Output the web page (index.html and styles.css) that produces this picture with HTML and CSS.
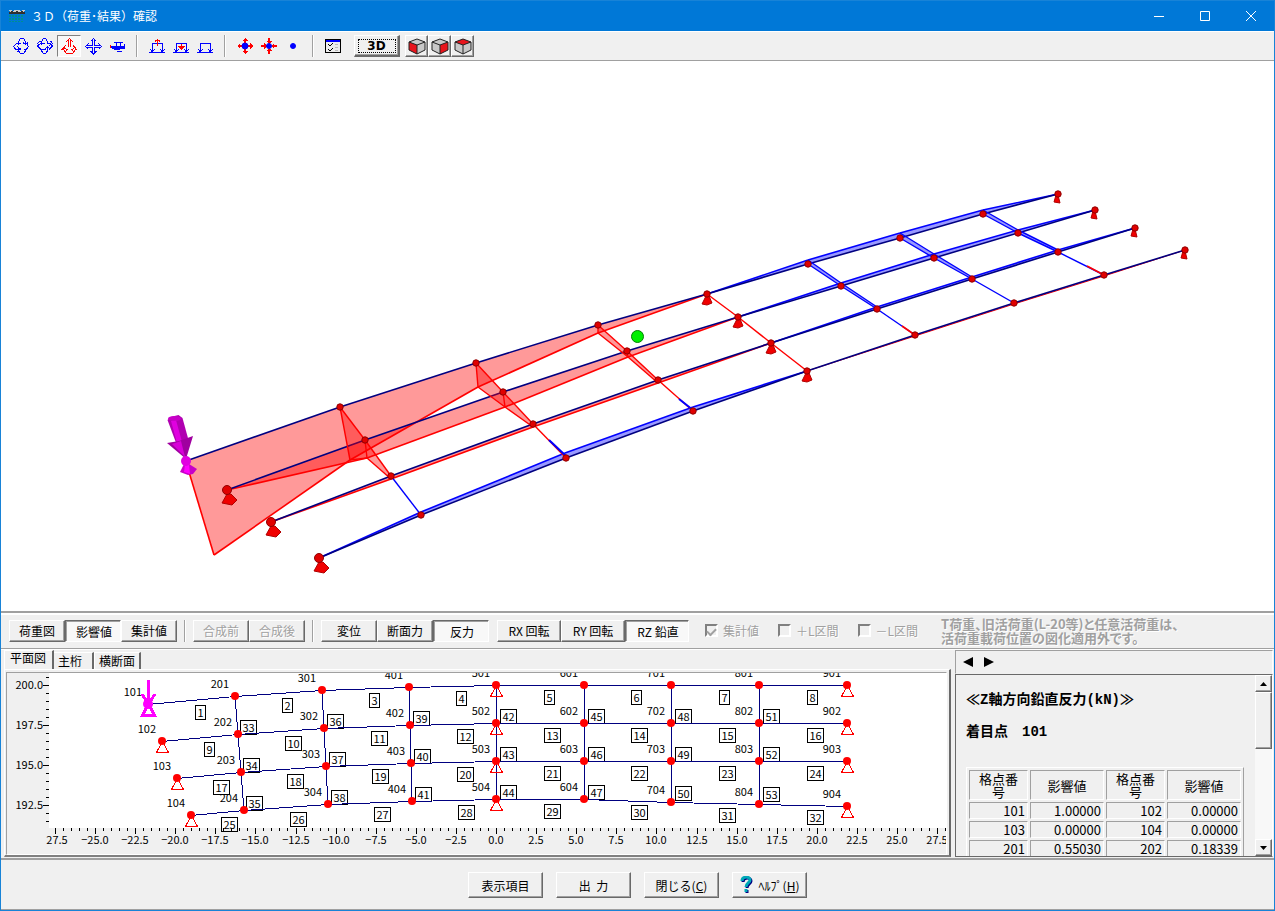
FILE: index.html
```html
<!DOCTYPE html>
<html lang="ja">

<head>
    <meta charset="utf-8">
    <meta name="viewport" content="width=device-width, initial-scale=1">
    <title>３Ｄ（荷重･結果）確認</title>
    <link rel="stylesheet" href="styles.css">
</head>

<body>
    <div class="window">
        <header class="titlebar">
            <svg class="app-icon" width="16" height="14" viewBox="0 0 16 14" shape-rendering="crispEdges">
                <path d="M0 1h3M5 1h6M13 1h3M1 2h14" stroke="#ccc" />
                <path d="M0 4h16M2 3h2M7 3h2M12 3h2" stroke="#303030" stroke-width="2" />
                <path d="M1 6v7M4 6v7M7 6v7M10 6v7M13 6v7" stroke="#008f8f" stroke-width="2" stroke-dasharray="2 1" />
            </svg>
            <h1>３Ｄ（荷重･結果）確認</h1>
            <div class="caption">
                <button aria-label="最小化"><svg width="12" height="12"><path d="M1 6.5h10" /></svg></button>
                <button aria-label="最大化"><svg width="12" height="12"><path d="M1.5 1.5h9v9h-9z" /></svg></button>
                <button aria-label="閉じる"><svg width="12" height="12"><path d="M1 1l10 10M11 1L1 11" /></svg></button>
            </div>
        </header>

        <div class="toolbar">
            <button class="tool" aria-label="X回転"><svg viewBox="0 0 16 16"><path d="M5.500 7V3.500l2-3h3l2 3V6M10 4.500l2.500 2 2.500-2M5.500 10v3l2 2.500h3l2-2.500v-2M10.500 5.500h3l2 3-2 2.500h-3M8 5.500H3.500L.5 8.500l2 2.500H8M4.500 8.500l3 2.500-3 2.500" /></svg></button>
            <button class="tool" aria-label="Y回転"><svg viewBox="0 0 16 16"><path d="M10.500 6V3.500l-2-3h-2l-2 3V7M4.500 10.500v2.500l2 2.500h2l2-2.500v-4M8 11.500l2.500-3 2.500 3M7.500 5.500H3.500L.5 8l3 3h4M12.500 11l3-3-2-2.500h-3M3.500 3l-3 2.500M13.500 3l2 2.500-3 2" /></svg></button>
            <button class="tool red on" aria-label="Z回転"><svg viewBox="0 0 16 16"><path d="M4.500 4.500l4-4 4 4M7.500 2v7M9.500 2v7M4.500 7.500L2.500 11l2.500 4h7l2.500-4-2-3.500M.5 12l2-2.500 3 2M16 12l-2-2.500-3 2M6.500 11l-2 2.500M10.500 11l2 2.500" /></svg></button>
            <button class="tool" aria-label="移動"><svg viewBox="0 0 16 16"><path d="M7.500 1v6.500H1M9.500 1v6.500H16M7.500 16V9.500H1M9.500 16V9.500H16M5.500 3.500l3-3 3 3M5.500 13l3 3 3-3M3.500 5.500l-3 3 3 3M13.500 5.500l3 3-3 3" /></svg></button>
            <button class="tool" aria-label="視点移動"><svg viewBox="0 0 16 16"><path d="M4.500 4.500h9M7.500 5v3M11.500 5v3M8 13.500h5M15.500 6v5" /><path class="solid" d="M2.500 8.500h12v2h-3l-2 1h-3l-4-2z" /><path class="red-line" d="M1.500 7v3" /></svg></button>
            <span class="sep"></span>
            <button class="tool" aria-label="全体"><svg viewBox="0 0 16 16"><path d="M3.500 13V5.500h10V13M0 14.500h16M1 11l2.500 3 2-3M11 11l2.500 3 2-3" /><path class="red-line" d="M8.500 8V1M6 3.500l2.500-2 2.500 2" /></svg></button>
            <button class="tool" aria-label="拡大"><svg viewBox="0 0 16 16"><path d="M3.500 13V5.500h10V13M0 14.500h16M1 11l2.500 3 2-3M11 11l2.500 3 2-3" /><path class="red-fill" d="M5 8h3V6h1v2h3l-3.500 4z" /></svg></button>
            <button class="tool" aria-label="縮小"><svg viewBox="0 0 16 16"><path d="M3.500 13V5.500h10V13M0 14.500h16M1 11l2.500 3 2-3M11 11l2.500 3 2-3" /></svg></button>
            <span class="sep"></span>
            <button class="tool" aria-label="節点拡大"><svg viewBox="0 0 16 16"><path class="red-fill" d="M8 0l3 3H9v10h2l-3 3-3-3h2V3H5zM0 8l3-3v2h10V5l3 3-3 3V9H3v2z" /><circle class="solid" cx="8" cy="8" r="3" /></svg></button>
            <button class="tool" aria-label="節点縮小"><svg viewBox="0 0 16 16"><path class="red-fill" d="M8 6L5 3h2V0h2v3h2zM8 10l3 3H9v3H7v-3H5zM6 8l-3 3V9H0V7h3V5zM10 8l3-3v2h3v2h-3v2z" /><circle class="solid" cx="8" cy="8" r="2.500" /></svg></button>
            <button class="tool" aria-label="節点標準"><svg viewBox="0 0 16 16"><circle class="solid" cx="8" cy="8" r="2.500" /></svg></button>
            <span class="sep"></span>
            <button class="tool" aria-label="表示設定"><svg viewBox="0 0 16 16"><path d="M.5 1.500h15v13H.5z" fill="#eee" stroke="#000" /><path d="M1 2.500h14" stroke-width="2" /><path d="M3 6l2 2 3-3M3 11l2 2 3-3" stroke="#000" /><path d="M10 6.500h3M10 9.500h3M10 12.500h3" stroke="#bbb" /></svg></button>
            <button class="btn view-3d"><span>3D</span></button>
            <div class="cubes">
                <button class="btn" aria-label="正面"><svg viewBox="0 0 18 18"><path d="M1 5l8-3 8 3v8l-8 4-8-4z" fill="#c8c8c8" /><path d="M1 5l8 3v9l-8-4z" fill="#e8141c" /><path d="M1 5l8-3 8 3v8l-8 4-8-4zM1 5l8 3 8-3M9 8v9" /></svg></button>
                <button class="btn" aria-label="側面"><svg viewBox="0 0 18 18"><path d="M1 5l8-3 8 3v8l-8 4-8-4z" fill="#c8c8c8" /><path d="M17 5L9 8v9l8-4z" fill="#e8141c" /><path d="M1 5l8-3 8 3v8l-8 4-8-4zM1 5l8 3 8-3M9 8v9" /></svg></button>
                <button class="btn" aria-label="平面"><svg viewBox="0 0 18 18"><path d="M1 5l8-3 8 3v8l-8 4-8-4z" fill="#c8c8c8" /><path d="M1 5l8-3 8 3-8 3z" fill="#e8141c" /><path d="M1 5l8-3 8 3v8l-8 4-8-4zM1 5l8 3 8-3M9 8v9" /></svg></button>
            </div>
        </div>

        <main class="view">
            <svg id="scene" viewBox="1 61 1273 550" role="img" aria-label="影響線図"></svg>
        </main>

        <div class="controls">
            <div class="group">
                <button class="btn">荷重図</button>
                <button class="btn on">影響値</button>
                <button class="btn">集計値</button>
            </div>
            <span class="sep"></span>
            <div class="group">
                <button class="btn" disabled>合成前</button>
                <button class="btn" disabled>合成後</button>
            </div>
            <span class="sep"></span>
            <div class="group">
                <button class="btn">変位</button>
                <button class="btn">断面力</button>
                <button class="btn on">反力</button>
            </div>
            <div class="group wide">
                <button class="btn">RX 回転</button>
                <button class="btn">RY 回転</button>
                <button class="btn on">RZ 鉛直</button>
            </div>
            <div class="checks">
                <label><input type="checkbox" checked disabled>集計値</label>
                <label><input type="checkbox" disabled>＋L区間</label>
                <label><input type="checkbox" disabled>－L区間</label>
            </div>
            <p class="note">T荷重、旧活荷重(L-20等)と任意活荷重は、<br>活荷重載荷位置の図化適用外です。</p>
        </div>

        <div class="lower">
            <section class="plan">
                <div class="tabs" role="tablist">
                    <button class="tab current" role="tab" aria-selected="true">平面図</button>
                    <button class="tab" role="tab">主桁</button>
                    <button class="tab" role="tab">横断面</button>
                </div>
                <div class="page">
                    <div class="plot">
                        <svg id="plot" viewBox="7 673 939 181" role="img" aria-label="平面図"></svg>
                    </div>
                </div>
            </section>

            <section class="result">
                <div class="pager">
                    <button aria-label="前へ"><svg width="10" height="10"><path d="M10 0v10L0 5z" /></svg></button>
                    <button aria-label="次へ"><svg width="10" height="10"><path d="M0 0v10l10-5z" /></svg></button>
                </div>
                <div class="report">
                    <div class="report-body">
                        <h2>≪Z軸方向鉛直反力(kN)≫</h2>
                        <h2>着目点　101</h2>
                        <table>
                            <thead>
                                <tr>
                                    <th class="no">格点番号</th>
                                    <th>影響値</th>
                                    <th class="no">格点番号</th>
                                    <th>影響値</th>
                                </tr>
                            </thead>
                            <tbody>
                                <tr><td>101</td><td>1.00000</td><td>102</td><td>0.00000</td></tr>
                                <tr><td>103</td><td>0.00000</td><td>104</td><td>0.00000</td></tr>
                                <tr><td>201</td><td>0.55030</td><td>202</td><td>0.18339</td></tr>
                            </tbody>
                        </table>
                    </div>
                    <div class="scrollbar">
                        <button class="btn" aria-label="上へ"><svg width="7" height="4"><path d="M0 4h7L3.500 0z" /></svg></button>
                        <div class="btn thumb"></div>
                        <div class="track"></div>
                        <button class="btn" aria-label="下へ"><svg width="7" height="4"><path d="M0 0h7L3.500 4z" /></svg></button>
                    </div>
                </div>
            </section>
        </div>

        <footer class="footer">
            <button class="btn">表示項目</button>
            <button class="btn">出&nbsp;&nbsp;力</button>
            <button class="btn"><span>閉じる(<u>C</u>)</span></button>
            <button class="btn help">
                <svg width="14" height="18" viewBox="0 0 14 18"><path d="M3 6c0-5 8-5 8-1 0 3-4 3-4 7M7 14v3" fill="none" stroke="#000080" stroke-width="3" /><path d="M2 5c0-5 8-5 8-1 0 3-4 3-4 7M6 13v3" fill="none" stroke="#00a8b8" stroke-width="3" /></svg>
                <span>ﾍﾙﾌﾟ(<u>H</u>)</span>
            </button>
        </footer>
    </div>

    <script src="script.js"></script>
</body>

</html>
```
FILE: styles.css
```css
* {
    box-sizing: border-box;
}

body {
    margin: 0;
    font-family: "Noto Sans CJK JP", sans-serif;
    font-size: 12px;
    color: #000;
}

button {
    font: inherit;
    color: inherit;
    margin: 0;
    padding: 0;
    border: 0;
    background: none;
}

svg {
    display: block;
}

.window {
    display: flex;
    flex-direction: column;
    height: 100vh;
    border: 1px solid #1883d7;
    background: #f0f0f0;
    overflow: hidden;
}

/* title bar */

.titlebar {
    display: flex;
    align-items: center;
    height: 30px;
    padding-left: 8px;
    background: #0078d7;
    color: #fff;
}

.titlebar h1 {
    flex: 1;
    margin: 0 0 2px 6px;
    font-size: 12px;
    font-weight: normal;
}

.caption {
    display: flex;
}

.caption button {
    display: flex;
    justify-content: center;
    align-items: center;
    width: 46px;
    height: 30px;
}

.caption path {
    fill: none;
    stroke: #fff;
}

/* buttons */

.btn {
    display: flex;
    justify-content: center;
    align-items: center;
    border: 1px solid;
    border-color: #fff #696969 #696969 #fff;
    box-shadow: inset -1px -1px #a0a0a0;
    background: #f0f0f0;
    white-space: nowrap;
}

.btn.on {
    padding: 2px 0 0 2px;
    border-color: #696969 #fff #fff #696969;
    box-shadow: inset 1px 1px #a0a0a0;
    background: #f8f8f8;
}

.btn:disabled {
    color: #a0a0a0;
    text-shadow: 1px 1px #fff;
}

.sep {
    width: 16px;
    height: 22px;
    display: flex;
    justify-content: center;
}

.sep::before {
    content: "";
    border-left: 1px solid #a0a0a0;
    border-right: 1px solid #fff;
}

/* toolbar */

.toolbar {
    display: flex;
    align-items: center;
    height: 30px;
    padding-left: 8px;
    border-top: 1px solid #fff;
    border-bottom: 1px solid #a0a0a0;
}

.tool {
    display: flex;
    justify-content: center;
    align-items: center;
    width: 24px;
    height: 22px;
}

.tool.on {
    border: 1px solid;
    border-color: #808080 #fff #fff #808080;
    background: #f8f8f8;
}

.tool svg {
    width: 16px;
    height: 16px;
    overflow: visible;
    fill: none;
    stroke: #00f;
    shape-rendering: crispEdges;
}

.tool.red svg,
.tool .red-line {
    stroke: #f00;
}

.tool .red-fill {
    fill: #f00;
    stroke: none;
}

.tool .solid {
    fill: #00f;
}

.tool circle {
    shape-rendering: auto;
}

.view-3d {
    width: 46px;
    height: 22px;
    margin: 0 5px 0 9px;
    border-width: 1px 2px 2px 1px;
    font: bold 12px "DejaVu Sans", sans-serif;
}

.view-3d span {
    width: 38px;
    border: 1px dotted #000;
    line-height: 12px;
}

.cubes {
    display: flex;
}

.cubes .btn {
    width: 23px;
    height: 22px;
}

.cubes svg {
    width: 18px;
    height: 18px;
    fill: none;
    stroke: #222;
}

.cubes path[fill] {
    stroke: none;
}

/* 3D view */

.view {
    flex: 1;
    min-height: 0;
    background: #fff;
}

.view svg {
    width: 100%;
    height: 100%;
    fill: none;
    stroke-width: 2;
}

.down {
    fill: rgba(255, 0, 0, 0.4);
}

.up {
    fill: rgba(0, 0, 255, 0.4);
}

.red-edge {
    stroke: #f00;
}

.blue-edge {
    stroke: #00f;
}

.base {
    stroke: #000080;
}

.joint {
    fill: #e00000;
    stroke: #900000;
    stroke-width: 1;
}

.foot {
    fill: #f00000;
    stroke: #b00000;
    stroke-width: 1;
}

/* result controls */

.controls {
    display: flex;
    align-items: center;
    height: 38px;
    padding: 0 8px;
    border-top: 2px solid #a0a0a0;
    border-bottom: 1px solid #a0a0a0;
    box-shadow: inset 0 2px #fff, 0 1px #fff;
}

.group {
    display: flex;
}

.group .btn {
    width: 56px;
    height: 22px;
}

.group.wide {
    margin-left: 8px;
}

.group.wide .btn {
    width: 64px;
}

.checks {
    display: flex;
    gap: 19px;
    margin-left: 16px;
    color: #a0a0a0;
    text-shadow: 1px 1px #fff;
}

.checks label {
    display: flex;
    align-items: center;
    gap: 5px;
}

.checks input {
    display: flex;
    justify-content: center;
    align-items: center;
    appearance: none;
    width: 13px;
    height: 13px;
    margin: 0;
    border: 2px solid;
    border-color: #808080 #fff #fff #808080;
}

.checks input:checked::before {
    content: "";
    width: 8px;
    height: 4px;
    border: solid #a0a0a0;
    border-width: 0 0 2px 2px;
    transform: rotate(-45deg);
}

.note {
    margin: 0 0 0 23px;
    font-size: 13px;
    font-weight: bold;
    font-feature-settings: "palt";
    line-height: 14px;
    white-space: nowrap;
    color: #a0a0a0;
    text-shadow: 1px 1px #fff;
}

/* plan drawing and tabs */

.lower {
    display: flex;
    height: 209px;
    padding: 0 1px 1px 0;
}

.plan {
    flex: 1;
    min-width: 0;
    padding-left: 3px;
}

.tabs {
    display: flex;
    align-items: flex-end;
    height: 20px;
}

.tab {
    height: 17px;
    padding: 0 4px;
    border: 1px solid #fff;
    border-right: 2px solid #696969;
    border-bottom: 0;
    line-height: 14px;
}

.tab:nth-child(2) {
    padding-right: 10px;
    border-left: 0;
}

.tab.current {
    height: 19px;
    padding: 0 6px 4px 5px;
}

.page {
    padding: 2px 2px 0 1px;
    border: solid;
    border-width: 1px 2px 2px 1px;
    border-color: #fff #696969 #808080 #fff;
}

.plot {
    border: 1px solid;
    border-color: #a0a0a0 #fff #fff #a0a0a0;
}

.plot svg {
    width: 100%;
    font-size: 11px;
}

.paper {
    fill: #fff;
}

.plot path {
    fill: none;
    stroke: #000080;
    shape-rendering: crispEdges;
}

.plot .tick,
.plot .tag {
    fill: none;
    stroke: #000;
    shape-rendering: crispEdges;
}

.plot .support {
    stroke: #f00;
}

.plot circle {
    fill: #f00;
}

.plot .load {
    stroke: #f0f;
    stroke-width: 3;
}

.plot circle.loaded {
    fill: #f0f;
}

.end {
    text-anchor: end;
}

.mid {
    text-anchor: middle;
}

/* report */

.result {
    display: flex;
    flex-direction: column;
    width: 318px;
    margin: 1px 0 0 4px;
}

.pager {
    display: flex;
    align-items: center;
    gap: 11px;
    height: 24px;
    padding-left: 7px;
    border: 1px solid;
    border-color: #a0a0a0 #fff #f0f0f0 #a0a0a0;
}

.report {
    display: flex;
    flex: 1;
    min-height: 0;
    border: 1px solid #696969;
    border-right-color: #fff;
}

.report-body {
    flex: 1;
    min-width: 0;
    overflow: hidden;
    padding: 15px 8px 0 10px;
    font-size: 13px;
}

.report h2 {
    margin: 0 0 12px;
    font-family: "Liberation Mono", "Noto Sans CJK JP", monospace;
    font-size: 14px;
    line-height: 20px;
}

.report table {
    width: 278px;
    margin-top: 25px;
    border: 1px solid;
    border-color: #fff #a0a0a0 #a0a0a0 #fff;
    border-spacing: 2px;
    table-layout: fixed;
}

.report th,
.report td {
    padding: 0 2px;
    border: 1px solid;
    border-color: #a0a0a0 #fff #fff #a0a0a0;
    line-height: 15px;
    text-align: right;
}

.report th {
    height: 30px;
    font-weight: normal;
    line-height: 13px;
    text-align: center;
}

.report .no {
    width: 59px;
    padding: 0 6px;
}

.scrollbar {
    display: flex;
    flex-direction: column;
    width: 17px;
}

.scrollbar .btn {
    height: 17px;
}

.scrollbar .thumb {
    height: 57px;
}

.track {
    flex: 1;
    background: #f8f8f8;
}

/* footer */

.footer {
    display: flex;
    justify-content: center;
    gap: 13px;
    height: 52px;
    padding-top: 12px;
    border-top: 2px solid #a0a0a0;
    border-bottom: 1px solid #a0a0a0;
}

.footer .btn {
    width: 75px;
    height: 26px;
}

.footer .help {
    gap: 5px;
}
```
FILE: script.js
```js
var SVG = 'http://www.w3.org/2000/svg'

function add(parent, tag, attrs, text) {
    var el = document.createElementNS(SVG, tag)
    for (var key in attrs) {
        el.setAttribute(key, attrs[key])
    }
    if (text !== undefined) {
        el.textContent = text
    }
    parent.appendChild(el)
    return el
}

// ---- plan drawing ----
// one array per girder, from the left support to the right one
var plan = [
    [[148, 704], [235, 696], [322, 690], [409, 687], [496, 685], [584, 685], [671, 685], [759, 685], [847, 685]],
    [[162, 741], [238, 734], [324, 728], [410, 725], [496, 723], [584, 723], [671, 723], [759, 723], [847, 723]],
    [[177, 778], [241, 772], [326, 766], [411, 763], [496, 761], [584, 761], [671, 761], [759, 761], [847, 761]],
    [[191, 815], [244, 810], [328, 804], [412, 801], [496, 799], [584, 799], [671, 802], [759, 804], [847, 806]]
]
var plot = document.getElementById('plot')

function segment(a, b) {
    return 'M' + a[0] + ' ' + (a[1] + 0.5) + 'L' + b[0] + ' ' + (b[1] + 0.5)
}

function memberTag(a, b, number) {
    var x = Math.floor((a[0] + b[0]) / 2) + 4
    var y = Math.floor((a[1] + b[1]) / 2) + 5
    var width = number < 10 ? 10 : 16
    add(plot, 'rect', { 'class': 'tag', x: x + 0.5, y: y + 0.5, width: width, height: 14 })
    add(plot, 'text', { 'class': 'mid', x: x + width / 2 + 0.5, y: y + 12 }, number)
}

function drawPlan() {
    add(plot, 'rect', { 'class': 'paper', x: 49, y: 673, width: 897, height: 155 })
    plan.forEach(function(row, r) {
        row.forEach(function(p, c) {
            if (c < 8) {
                add(plot, 'path', { d: segment(p, row[c + 1]) })
                memberTag(p, row[c + 1], r * 8 + c + 1)
            }
            if (r < 3 && c > 0 && c < 8) {
                add(plot, 'path', { d: segment(p, plan[r + 1][c]) })
                memberTag(p, plan[r + 1][c], 33 + (c - 1) * 3 + r)
            }
        })
    })
    plan.forEach(function(row, r) {
        row.forEach(function(p, c) {
            var loaded = r === 0 && c === 0
            if (c % 4 === 0) {
                add(plot, 'path', {
                    'class': loaded ? 'load' : 'support',
                    d: 'M' + (p[0] + 0.5) + ' ' + p[1] + 'l-6 11.5h12z'
                })
            }
            add(plot, 'circle', { 'class': loaded ? 'loaded' : '', cx: p[0], cy: p[1], r: loaded ? 5 : 4 })
            add(plot, 'text', { 'class': 'end', x: p[0] - 6, y: p[1] - 8 }, (c + 1) * 100 + r + 1)
        })
    })
    add(plot, 'path', { 'class': 'load', d: 'M148.5 680v22M142 694l6.5 10 6.5-10' })
}

function drawAxes() {
    var v, pos
    for (v = -55; v <= 56; v++) {
        pos = Math.round(496 + v * 8.02)
        add(plot, 'path', { 'class': 'tick', d: 'M' + (pos + 0.5) + ' 828v' + (v % 5 ? 3 : 6) })
        if (v % 5 === 0) {
            add(plot, 'text', { 'class': 'mid', x: v === -55 ? pos + 2 : pos, y: 844 }, v === -55 ? '27.5' : (v / 2).toFixed(1).replace('-', '−'))
        }
    }
    for (v = 383; v <= 401; v++) {
        pos = 685 + (400 - v) * 8
        add(plot, 'path', { 'class': 'tick', d: 'M49 ' + (pos + 0.5) + 'h' + (v % 5 ? -3 : -6) })
        if (v % 5 === 0) {
            add(plot, 'text', { 'class': 'end', x: 43, y: pos + 4 }, (v / 2).toFixed(1))
        }
    }
}

// ---- 3D view ----
// x, y of the joint, then x, y of its influence value
var grid = [
    [[186, 461, 214, 555], [340, 407, 350, 460], [476, 363, 478, 387], [598, 325, 598, 333], [707, 294, 707, 294], [808, 264, 808, 260], [900, 238, 900, 233], [983, 214, 983, 210], [1058, 194, 1058, 194]],
    [[227, 490, 227, 490], [365, 440, 367, 458], [503, 392, 505, 407], [627, 351, 628, 357], [738, 317, 738, 317], [841, 286, 841, 283], [934, 258, 934, 254], [1018, 233, 1018, 230], [1095, 210, 1095, 210]],
    [[271, 522, 271, 522], [391, 476, 391, 479], [533, 424, 533, 427], [658, 380, 658, 383], [771, 343, 771, 343], [877, 309, 877, 307], [972, 279, 972, 277], [1058, 252, 1058, 250], [1135, 228, 1135, 228]],
    [[319, 558, 319, 558], [421, 515, 421, 512], [566, 458, 565, 453], [693, 411, 693, 407], [807, 371, 807, 371], [915, 335, 915, 336], [1014, 303, 1014, 304], [1104, 275, 1104, 276], [1185, 250, 1185, 250]]
]
var scene = document.getElementById('scene')

function line(cls, x1, y1, x2, y2, width) {
    add(scene, 'path', {
        'class': cls,
        d: 'M' + x1 + ' ' + y1 + 'L' + x2 + ' ' + y2,
        'stroke-width': width || 1.6
    })
}

function area(cls, a, b) {
    add(scene, 'path', {
        'class': cls,
        d: 'M' + a[0] + ' ' + a[1] + 'L' + b[0] + ' ' + b[1] + 'L' + b[2] + ' ' + b[3] + 'L' + a[2] + ' ' + a[3] + 'z'
    })
}

function drawGirders() {
    grid.forEach(function(row, r) {
        for (var c = 0; c < 8; c++) {
            var a = row[c]
            var b = row[c + 1]
            var blue = r < 3 ? c > 3 : c < 4
            area(blue ? 'up' : 'down', a, b)
            line(blue ? 'blue-edge' : 'red-edge', a[2], a[3], b[2], b[3], r === 3 && !blue ? 1 : 1.6)
            line('base', a[0], a[1], b[0], b[1])
        }
    })
}

function drawCrossBeams() {
    for (var c = 1; c < 8; c++) {
        for (var r = 0; r < 3; r++) {
            var a = grid[r][c]
            var b = grid[r + 1][c]
            var blue = c > 4 || (r === 2 && c === 1)
            var cls = blue ? 'blue-edge' : 'red-edge'
            if (c !== 4 && r < 2) {
                area(blue ? 'up' : 'down', a, b)
            }
            line(cls, a[0], a[1], b[0], b[1], 1.4)
            if (c !== 4 && r < 2) {
                line(cls, a[2], a[3], b[2], b[3], 1.4)
            }
            if (!blue && c < 4) {
                line(cls, a[0], a[1], a[2], a[3], 1.4)
            }
        }
    }
    // sign changes inside the outer bay
    line('blue-edge', 549, 440, 566, 456, 2)
    line('blue-edge', 679, 399, 693, 410, 2)
    line('red-edge', 902, 326, 915, 335)
    line('red-edge', 1087, 266, 1104, 275)
}

function drawJoints() {
    grid.forEach(function(row, r) {
        row.forEach(function(p, c) {
            if (r === 0 && c === 0) {
                return
            }
            var x = p[0]
            var y = p[1]
            if (c === 0) {
                add(scene, 'path', { 'class': 'foot', d: 'M' + x + ' ' + (y + 4) + 'h4l6 6-5 5-10-2z' })
            } else if (c === 4) {
                add(scene, 'path', { 'class': 'foot', d: 'M' + (x - 1) + ' ' + (y + 2) + 'h3l3 7-5 2-5-1z' })
            } else if (c === 8) {
                add(scene, 'path', { 'class': 'foot', d: 'M' + (x - 2) + ' ' + (y + 1) + 'h2l2 8-6-1z' })
            }
            add(scene, 'circle', { 'class': 'joint', cx: x, cy: y, r: c === 0 ? 4.5 : 3.2 })
        })
    })
}

function drawLoad() {
    line('red-edge', 189, 472, 214, 555)
    add(scene, 'path', { fill: '#b000b0', d: 'M167.5 420l3-3 8-2 4 3 6 22-12 4z' })
    add(scene, 'path', { fill: '#e000e0', d: 'M171 421l5-1 6 22-5 1z' })
    add(scene, 'ellipse', { fill: '#c800c8', cx: 174.5, cy: 418.5, rx: 6.5, ry: 2.5 })
    add(scene, 'path', { fill: '#a000a0', d: 'M167 443l12-2 14-5-7 23z' })
    add(scene, 'path', { fill: '#d800d8', d: 'M172 444l9-3 4 16z' })
    add(scene, 'path', { fill: '#c800c8', d: 'M184 464h5l8 5-4 5-5 1-8-3z' })
    add(scene, 'path', { fill: '#f0f', d: 'M185 464h4l1 10-6-2z' })
    add(scene, 'circle', { fill: '#e000e0', cx: 186, cy: 461, r: 5 })
    add(scene, 'circle', { fill: '#00f000', stroke: '#008000', 'stroke-width': 1, cx: 637.5, cy: 336.5, r: 6 })
}

drawPlan()
drawAxes()
drawGirders()
drawCrossBeams()
drawJoints()
drawLoad()
```
